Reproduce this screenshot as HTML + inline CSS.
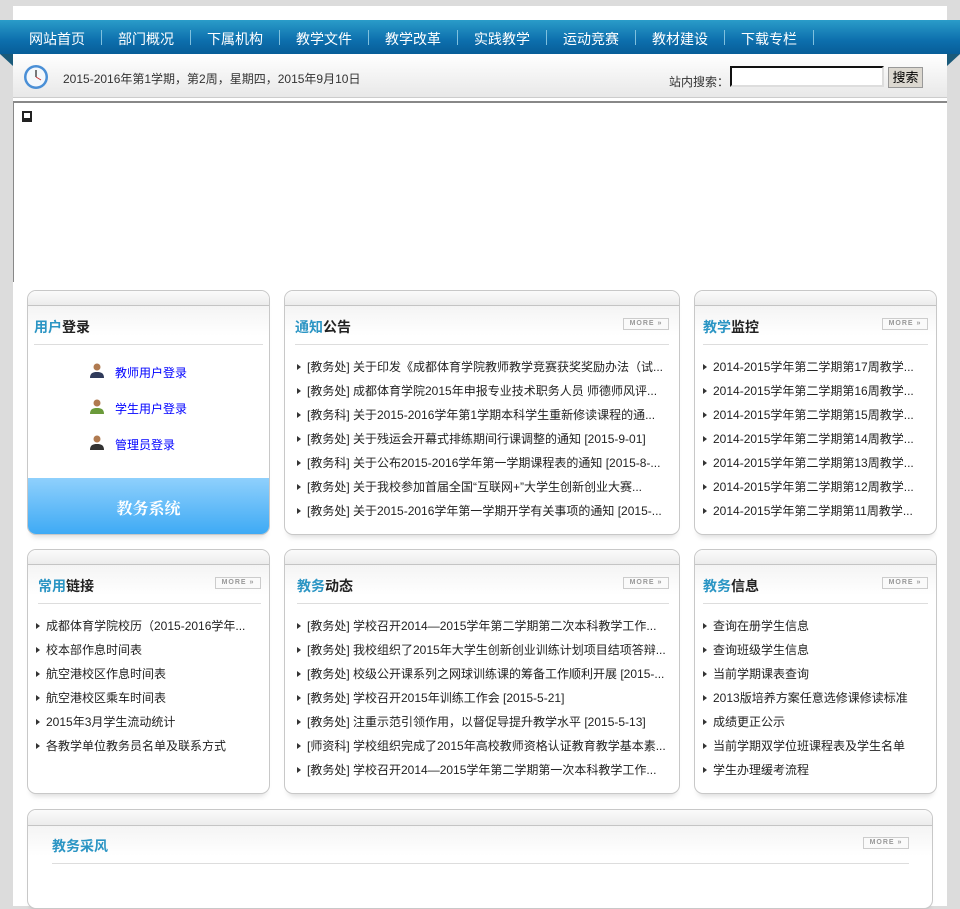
<!DOCTYPE html>
<html><head><meta charset="utf-8"><style>
*{margin:0;padding:0;box-sizing:border-box}
body{width:960px;height:873px;overflow:hidden;background:#dcdcdc;font-family:"Liberation Sans","Noto Sans CJK SC",sans-serif;font-size:12px;color:#222;position:relative}
.page{position:absolute;left:13px;top:6px;width:934px;height:900px;background:#fff}
.nav{position:absolute;left:0;top:20px;width:960px;height:34px;background:linear-gradient(#2a9cc9,#0d6fad 60%,#075d98);}
.nav span{position:absolute;top:9px;color:#fff;font-size:14px}
.nav i{position:absolute;top:10px;width:1px;height:15px;background:#7fc0de}
.sub{position:absolute;left:13px;top:54px;width:934px;height:44px;background:linear-gradient(#fff,#e8e8e8);border-bottom:1px solid #ccc}
.tri{position:absolute;top:54px;width:0;height:0}
.flash{position:absolute;left:13px;top:101px;width:934px;height:181px;border-top:2px solid #888;border-left:1px solid #888}
.box{position:absolute;background:#fff;border:1px solid #c8c8c8;border-radius:9px;overflow:hidden;box-shadow:0 6px 6px -4px rgba(0,0,0,.15)}
.box .top{height:15px;background:linear-gradient(#fbfbfb,#ececec);border-bottom:1px solid #c4c4c4}
.box .top2{height:30px;background:linear-gradient(#f4f4f4,#fff)}
.box .hd{position:absolute;top:26px;left:8px;right:8px;height:28px;border-bottom:1px solid #ddd;font-size:14px;font-weight:bold;color:#222}
.box .hd b{color:#2b95c4;font-weight:bold}
.more{position:absolute;right:0;top:1px;width:46px;height:12px;border:1px solid #ccc;font-size:7px;color:#999;text-align:center;line-height:10px;letter-spacing:1px;background:#fafafa}
ul{list-style:none;position:absolute;left:12px;right:10px}
li{height:24px;line-height:24px;white-space:nowrap;overflow:hidden;font-size:12px;padding-left:10px;position:relative;color:#222}
li:before{content:"";position:absolute;left:0;top:9px;border-left:4px solid #333;border-top:3px solid transparent;border-bottom:3px solid transparent}
.login{position:absolute;left:60px;font-size:12px;color:#00f}
.ic{position:absolute;left:-26px;top:-2px;width:16px;height:16px}
</style></head><body>
<div class="page"></div>
<div class="nav">
<span style="left:29px">网站首页</span><i style="left:101px"></i>
<span style="left:118px">部门概况</span><i style="left:190px"></i>
<span style="left:207px">下属机构</span><i style="left:279px"></i>
<span style="left:296px">教学文件</span><i style="left:368px"></i>
<span style="left:385px">教学改革</span><i style="left:457px"></i>
<span style="left:474px">实践教学</span><i style="left:546px"></i>
<span style="left:563px">运动竞赛</span><i style="left:635px"></i>
<span style="left:652px">教材建设</span><i style="left:724px"></i>
<span style="left:741px">下载专栏</span><i style="left:813px"></i>
</div>
<div class="tri" style="left:0;border-top:12px solid #1a5a7a;border-left:13px solid transparent"></div>
<div class="tri" style="left:947px;border-top:12px solid #1a5a7a;border-right:13px solid transparent"></div>
<div class="sub">
<svg style="position:absolute;left:10px;top:10px" width="26" height="26"><circle cx="13" cy="13" r="12" fill="#4a8fd6"/><circle cx="13" cy="13" r="9.5" fill="#f4f8fc"/><line x1="13" y1="13" x2="13" y2="6" stroke="#333" stroke-width="1.3"/><line x1="13" y1="13" x2="18" y2="16" stroke="#c33" stroke-width="1"/></svg>
<span style="position:absolute;left:50px;top:16px;color:#333">2015-2016年第1学期，第2周，星期四，2015年9月10日</span>
<span style="position:absolute;left:656px;top:19px;color:#333">站内搜索：</span>
<div style="position:absolute;left:717px;top:12px;width:154px;height:21px;border:2px inset #ccc;border-color:#666 #ddd #ddd #666;background:#fff"></div>
<div style="position:absolute;left:875px;top:13px;width:35px;height:21px;border:1px solid #999;background:#dcd8d0;font-size:13px;text-align:center;line-height:19px;color:#000">搜索</div>
</div>
<div class="flash"><div style="position:absolute;left:8px;top:8px;width:10px;height:11px;border:2px solid #222;border-bottom-width:4px"></div></div>

<div class="box" style="left:27px;top:290px;width:243px;height:245px">
<div class="top"></div><div class="top2"></div><div class="hd" style="left:6px;right:6px"><b>用户</b>登录</div>
<div class="login" style="top:73px;left:87px"><svg class="ic" viewBox="0 0 16 16"><circle cx="8" cy="5" r="3.5" fill="#b07a50"/><path d="M1 16c0-5 3-6 7-6s7 1 7 6z" fill="#2f3a5a"/></svg>教师用户登录</div>
<div class="login" style="top:109px;left:87px"><svg class="ic" viewBox="0 0 16 16"><circle cx="8" cy="5" r="3.5" fill="#b07a50"/><path d="M1 16c0-5 3-6 7-6s7 1 7 6z" fill="#6a9a3a"/></svg>学生用户登录</div>
<div class="login" style="top:145px;left:87px"><svg class="ic" viewBox="0 0 16 16"><circle cx="8" cy="5" r="3.5" fill="#b07a50"/><path d="M1 16c0-5 3-6 7-6s7 1 7 6z" fill="#333"/></svg>管理员登录</div>
<div style="position:absolute;left:0;bottom:0;width:100%;height:56px;background:linear-gradient(#8fd0fc,#3eaaf5);color:#fff;font-size:16px;font-weight:bold;text-align:center;line-height:60px;font-family:'Noto Serif CJK SC',serif">教务系统</div>
</div>

<div class="box" style="left:284px;top:290px;width:396px;height:245px">
<div class="top"></div><div class="top2"></div><div class="hd" style="left:10px;right:10px"><b>通知</b>公告<div class="more">MORE »</div></div>
<ul style="top:64px"><li>[教务处] 关于印发《成都体育学院教师教学竞赛获奖奖励办法（试...</li><li>[教务处] 成都体育学院2015年申报专业技术职务人员 师德师风评...</li><li>[教务科] 关于2015-2016学年第1学期本科学生重新修读课程的通...</li><li>[教务处] 关于残运会开幕式排练期间行课调整的通知 [2015-9-01]</li><li>[教务科] 关于公布2015-2016学年第一学期课程表的通知 [2015-8-...</li><li>[教务处] 关于我校参加首届全国“互联网+”大学生创新创业大赛...</li><li>[教务处] 关于2015-2016学年第一学期开学有关事项的通知 [2015-...</li></ul>
</div>

<div class="box" style="left:694px;top:290px;width:243px;height:245px">
<div class="top"></div><div class="top2"></div><div class="hd"><b>教学</b>监控<div class="more">MORE »</div></div>
<ul style="top:64px;left:8px"><li>2014-2015学年第二学期第17周教学...</li><li>2014-2015学年第二学期第16周教学...</li><li>2014-2015学年第二学期第15周教学...</li><li>2014-2015学年第二学期第14周教学...</li><li>2014-2015学年第二学期第13周教学...</li><li>2014-2015学年第二学期第12周教学...</li><li>2014-2015学年第二学期第11周教学...</li></ul>
</div>

<div class="box" style="left:27px;top:549px;width:243px;height:245px">
<div class="top"></div><div class="top2"></div><div class="hd" style="left:10px"><b>常用</b>链接<div class="more">MORE »</div></div>
<ul style="top:64px;left:8px"><li>成都体育学院校历（2015-2016学年...</li><li>校本部作息时间表</li><li>航空港校区作息时间表</li><li>航空港校区乘车时间表</li><li>2015年3月学生流动统计</li><li>各教学单位教务员名单及联系方式</li></ul>
</div>

<div class="box" style="left:284px;top:549px;width:396px;height:245px">
<div class="top"></div><div class="top2"></div><div class="hd" style="left:12px;right:10px"><b>教务</b>动态<div class="more">MORE »</div></div>
<ul style="top:64px"><li>[教务处] 学校召开2014—2015学年第二学期第二次本科教学工作...</li><li>[教务处] 我校组织了2015年大学生创新创业训练计划项目结项答辩...</li><li>[教务处] 校级公开课系列之网球训练课的筹备工作顺利开展 [2015-...</li><li>[教务处] 学校召开2015年训练工作会 [2015-5-21]</li><li>[教务处] 注重示范引领作用，以督促导提升教学水平 [2015-5-13]</li><li>[师资科] 学校组织完成了2015年高校教师资格认证教育教学基本素...</li><li>[教务处] 学校召开2014—2015学年第二学期第一次本科教学工作...</li></ul>
</div>

<div class="box" style="left:694px;top:549px;width:243px;height:245px">
<div class="top"></div><div class="top2"></div><div class="hd"><b>教务</b>信息<div class="more">MORE »</div></div>
<ul style="top:64px;left:8px"><li>查询在册学生信息</li><li>查询班级学生信息</li><li>当前学期课表查询</li><li>2013版培养方案任意选修课修读标准</li><li>成绩更正公示</li><li>当前学期双学位班课程表及学生名单</li><li>学生办理缓考流程</li></ul>
</div>

<div class="box" style="left:27px;top:809px;width:906px;height:100px">
<div class="top" style="height:16px"></div><div class="top2"></div><div class="hd" style="left:24px;right:23px;top:26px;height:28px"><b>教务采风</b><div class="more">MORE »</div></div>
</div>
</body></html>
